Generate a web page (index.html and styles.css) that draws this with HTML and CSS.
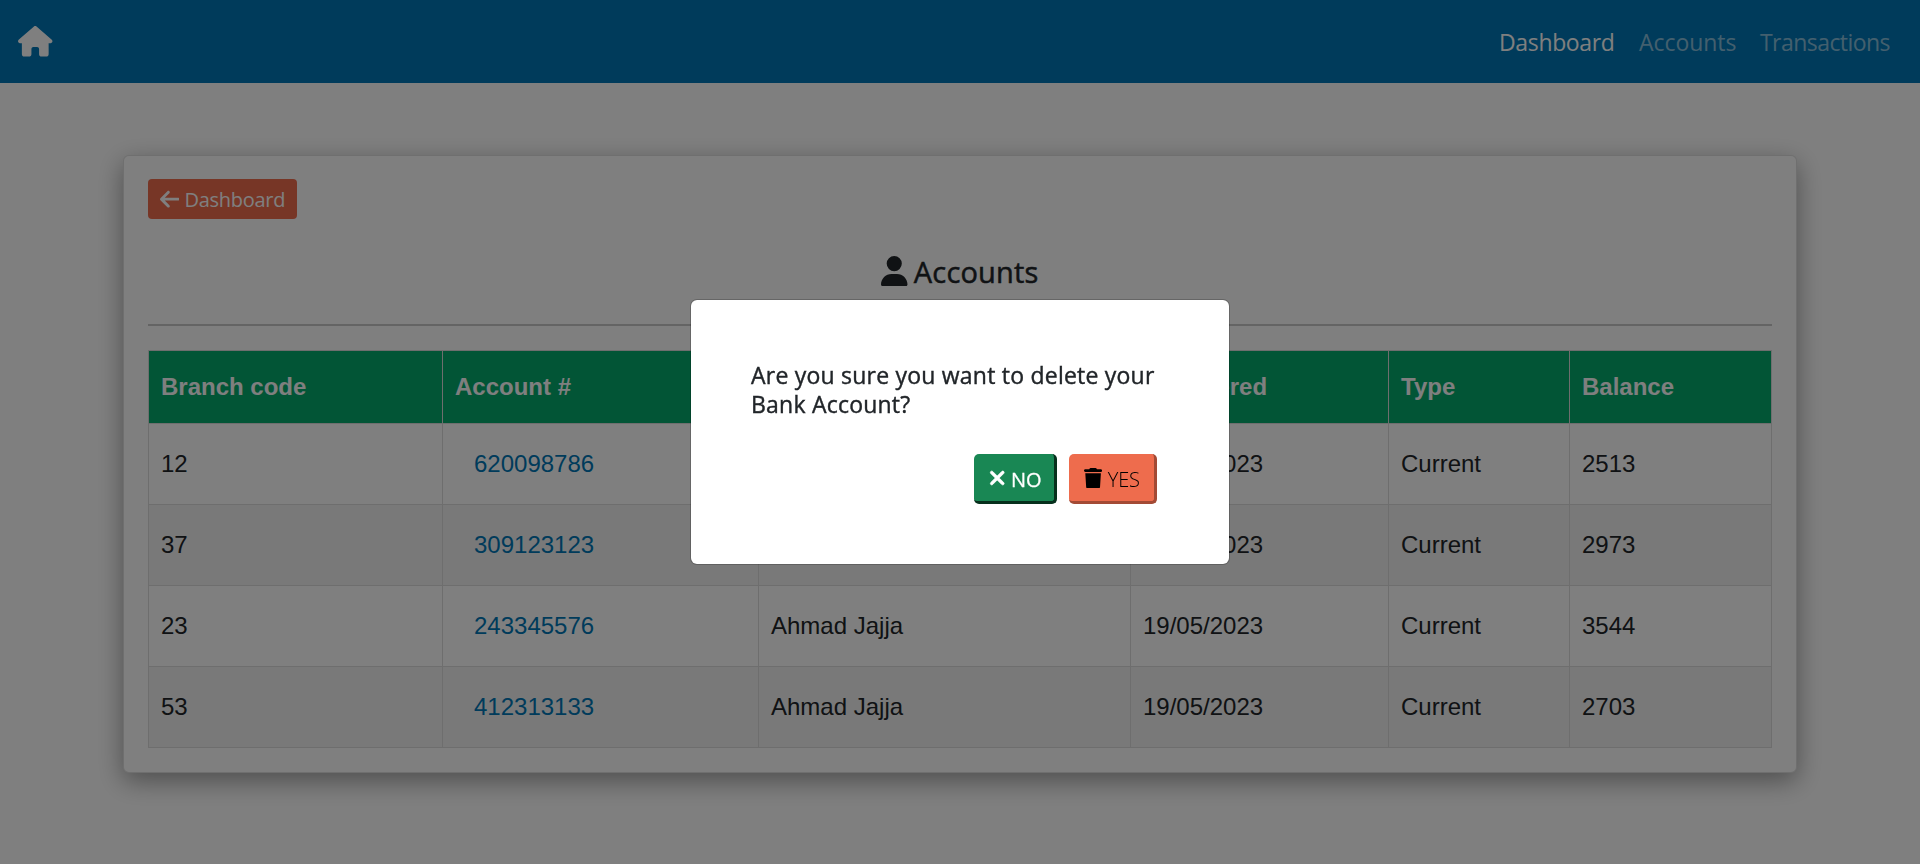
FILE: index.html
```html
<!DOCTYPE html>
<html lang="en">
<head>
<meta charset="utf-8">
<title>Accounts</title>
<link rel="stylesheet" href="styles.css">
</head>
<body>
<nav class="navbar">
  <a class="brand" aria-label="Home"><svg class="icon-home" viewBox="0 0 576 512" fill="currentColor"><path d="M575.8 255.5c0 18-15 32.1-32 32.1h-32l.7 160.2c0 2.7-.2 5.4-.5 8.1V472c0 22.1-17.9 40-40 40H392c-22.1 0-40-17.9-40-40V384c0-17.700-14.300-32-32-32H256c-17.700 0-32 14.300-32 32v88c0 22.100-17.900 40-40 40H104c-22.100 0-40-17.900-40-40V287.600H32c-18 0-32-14-32-32.100c0-9 3-17 10-24L266.400 8c7-7 15-8 22-8s15 2 21 7L564.800 231.500c8 7 12 15 11 24z"/></svg></a>
  <div class="nav-links">
    <a class="nav-link active nav-dashboard">Dashboard</a>
    <a class="nav-link nav-accounts">Accounts</a>
    <a class="nav-link nav-transactions">Transactions</a>
  </div>
</nav>
<main class="card">
  <a class="back-btn"><svg class="icon-arrow" viewBox="0 0 448 512" fill="currentColor"><path d="M9.400 233.400c-12.500 12.500-12.500 32.800 0 45.300l160 160c12.500 12.500 32.800 12.500 45.300 0s12.500-32.800 0-45.300L109.200 288 416 288c17.700 0 32-14.300 32-32s-14.300-32-32-32l-306.700 0L214.600 118.600c12.500-12.500 12.500-32.800 0-45.300s-32.800-12.500-45.300 0l-160 160z"/></svg><span class="back-text">Dashboard</span></a>
  <h3 class="title"><svg class="icon-user" viewBox="0 0 448 512" fill="currentColor"><path d="M224 256A128 128 0 1 0 224 0a128 128 0 1 0 0 256zm-45.700 48C79.800 304 0 383.800 0 482.300C0 498.700 13.300 512 29.700 512H418.300c16.400 0 29.700-13.300 29.700-29.700C448 383.800 368.200 304 269.700 304H178.300z"/></svg><span class="title-text">Accounts</span></h3>
  <hr class="rule">
  <table class="accounts">
    <colgroup><col class="c1"><col class="c2"><col class="c3"><col class="c4"><col class="c5"><col class="c6"></colgroup>
    <thead><tr><th>Branch code</th><th>Account #</th><th></th><th>Registered</th><th>Type</th><th>Balance</th></tr></thead>
    <tbody>
      <tr><td>12</td><td><a class="acc-link">620098786</a></td><td>Ahmad Jajja</td><td>19/05/2023</td><td>Current</td><td>2513</td></tr>
      <tr><td>37</td><td><a class="acc-link">309123123</a></td><td>Ahmad Jajja</td><td>19/05/2023</td><td>Current</td><td>2973</td></tr>
      <tr><td>23</td><td><a class="acc-link">243345576</a></td><td>Ahmad Jajja</td><td>19/05/2023</td><td>Current</td><td>3544</td></tr>
      <tr><td>53</td><td><a class="acc-link">412313133</a></td><td>Ahmad Jajja</td><td>19/05/2023</td><td>Current</td><td>2703</td></tr>
    </tbody>
  </table>
</main>
<div class="backdrop">
  <div class="modal" role="dialog">
    <h4 class="question">Are you sure you want to delete your<br>Bank Account?</h4>
    <div class="actions">
      <button class="btn btn-no"><svg class="icon-x" viewBox="0 0 384 512" fill="currentColor"><path stroke="currentColor" stroke-width="18" d="M342.600 150.600c12.500-12.500 12.500-32.800 0-45.300s-32.800-12.500-45.300 0L192 210.700 86.600 105.400c-12.500-12.500-32.800-12.500-45.300 0s-12.500 32.800 0 45.300L146.700 256 41.400 361.400c-12.500 12.500-12.500 32.800 0 45.300s32.800 12.500 45.300 0L192 301.300 297.400 406.600c12.500 12.500 32.800 12.500 45.300 0s12.500-32.800 0-45.300L237.300 256 342.600 150.600z"/></svg><span class="btn-text">NO</span></button>
      <button class="btn btn-yes"><svg class="icon-trash" viewBox="0 0 448 512" fill="currentColor"><path d="M135.200 17.700L128 32H32C14.300 32 0 46.300 0 64S14.300 96 32 96H416c17.700 0 32-14.300 32-32s-14.300-32-32-32H320l-7.200-14.300C307.400 6.800 296.300 0 284.200 0H163.800c-12.100 0-23.200 6.800-28.600 17.700zM416 128H32L53.200 467c1.600 25.300 22.600 45 47.900 45H346.900c25.300 0 46.300-19.700 47.900-45L416 128z"/></svg><span class="btn-text">YES</span></button>
    </div>
  </div>
</div>
</body>
</html>
```
FILE: styles.css
```css
* { box-sizing: border-box; }
body {
  margin: 0;
  height: 864px;
  overflow: hidden;
  background: #fff;
  color: #212529;
  font-family: "Open Sans", "Noto Sans", sans-serif;
}
svg { display: block; flex: none; }
.navbar {
  display: flex;
  align-items: center;
  justify-content: space-between;
  height: 83px;
  padding: 0 29px 0 18px;
  background: #0077b6;
}
.brand { color: #fff; }
.icon-home { width: 34.500px; height: 30.600px; }
.nav-links { display: flex; gap: 24px; }
.nav-link {
  color: rgba(255, 255, 255, .55);
  font-size: 23px;
  line-height: 36px;
  letter-spacing: -.35px;
  white-space: nowrap;
}
.nav-link.active { color: #fff; }
.nav-dashboard { width: 116px; }
.nav-accounts { width: 97px; letter-spacing: -.05px; }
.nav-transactions { width: 131px; letter-spacing: -.55px; }
.card {
  width: 1674px;
  height: 618px;
  margin: 72px auto 0;
  padding: 23px 24px;
  border: 1px solid rgba(0, 0, 0, .125);
  border-radius: 6px;
  background: #fff;
  box-shadow: 0 8px 26px rgba(0, 0, 0, .39);
}
.back-btn {
  display: flex;
  align-items: center;
  width: 149px;
  height: 40px;
  padding-left: 11.500px;
  gap: 5.500px;
  border-radius: 4px;
  background: #ee6c4d;
  color: #fff;
  font-size: 20px;
  line-height: 30px;
  letter-spacing: -.3px;
}
.back-text { padding-top: 2px; }
.icon-arrow { width: 19.600px; height: 22.400px; }
.title {
  display: flex;
  align-items: center;
  justify-content: center;
  gap: 6px;
  height: 34px;
  margin: 35px 0 0;
  font-size: 29px;
  font-weight: 500;
  -webkit-text-stroke: .5px currentColor;
}
.title-text { width: 125px; letter-spacing: .2px; white-space: nowrap; }
.icon-user { width: 26.500px; height: 30.300px; }
.rule { height: 2px; margin: 36px 0 24px; border: 0; background: #c8c8c8; }
.accounts {
  width: 1623px;
  table-layout: fixed;
  border-collapse: collapse;
  font-family: "Liberation Sans", Arial, sans-serif;
  font-size: 24px;
  line-height: 36px;
}
.c1 { width: 294px; }
.c2 { width: 316px; }
.c3 { width: 372px; }
.c4 { width: 258px; }
.c5 { width: 181px; }
.c6 { width: 202px; }
.accounts th, .accounts td { padding: 0 12px; border: 1px solid #ddd; text-align: left; }
.accounts th { height: 73px; background: #04aa6d; color: #fff; font-weight: 700; }
.accounts td { height: 81px; }
.accounts tbody tr:nth-child(even) { background: #f2f2f2; }
.acc-link { padding-left: 19px; color: #0077b6; }
.backdrop {
  position: fixed;
  inset: 0;
  display: flex;
  align-items: flex-start;
  justify-content: center;
  padding-top: 299px;
  background: rgba(0, 0, 0, .5);
}
.modal {
  width: 540px;
  height: 266px;
  padding: 61px 72px 0 60px;
  border: 1px solid rgba(0, 0, 0, .2);
  border-radius: 7px;
  background: #fff;
  background-clip: padding-box;
}
.question {
  margin: 0;
  font-size: 23px;
  font-weight: 500;
  line-height: 29px;
  letter-spacing: .22px;
  white-space: nowrap;
  -webkit-text-stroke: .4px currentColor;
}
.actions { display: flex; justify-content: flex-end; gap: 12px; margin-top: 35px; }
.btn {
  display: flex;
  align-items: center;
  height: 50px;
  padding: 1px 0 0 15px;
  gap: 5.500px;
  border: 0 solid;
  border-width: 0 3px 3px 0;
  border-radius: 5px;
  font-family: inherit;
  font-size: 20px;
  letter-spacing: -.1px;
}
.btn-text { padding-top: 2px; }
.btn-no { width: 83px; background: #198754; border-color: #07301d; color: #fff; }
.btn-no .btn-text { -webkit-text-stroke: .3px currentColor; }
.btn-yes { width: 88px; background: #ee6c4d; border-color: #a34a35; color: #000; font-weight: 300; }
.icon-x { width: 16.500px; height: 22px; }
.icon-trash { width: 18.200px; height: 20.800px; }
```
